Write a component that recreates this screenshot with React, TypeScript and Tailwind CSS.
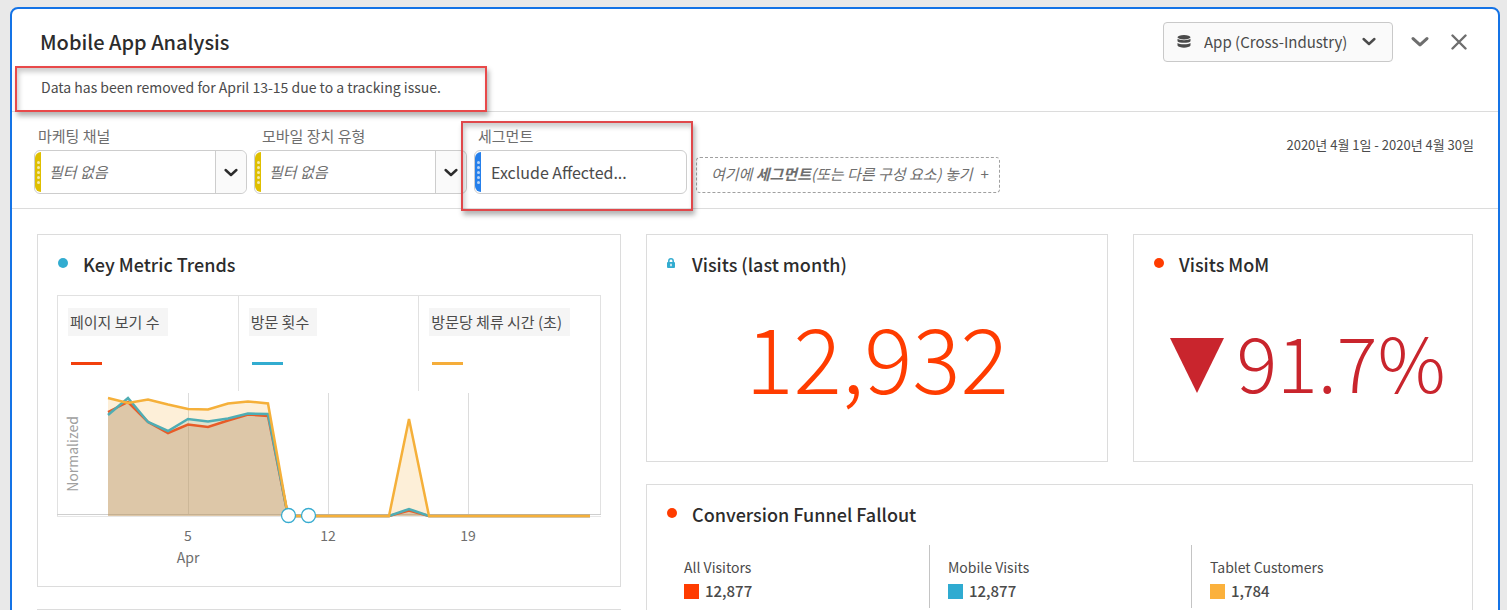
import type { ReactNode } from "react";

type Series = { name: string; color: string; opacity: number; points: [number, number][] };

const tail: [number, number][] = [
  [231, 125],
  [332, 125],
];

const series: Series[] = [
  {
    name: "페이지 보기 수",
    color: "#e85c28",
    opacity: 0.25,
    points: [[51, 21], [71, 11], [91, 31], [111, 42], [131, 33.5], [151, 36], [171, 29.5], [191, 23.5], [211, 25], ...tail, [352, 119.5], [372, 125], [533, 125]],
  },
  {
    name: "방문 횟수",
    color: "#4fadb4",
    opacity: 0.2,
    points: [[51, 24], [71, 7], [91, 31], [111, 40], [131, 28], [151, 30.5], [171, 27.5], [191, 22.5], [211, 23], ...tail, [352, 118], [372, 125], [533, 125]],
  },
  {
    name: "방문당 체류 시간 (초)",
    color: "#f5b03a",
    opacity: 0.2,
    points: [[51, 7], [71, 12], [91, 8.5], [111, 13.5], [131, 18], [151, 18.5], [171, 12.5], [191, 10.5], [211, 12.5], ...tail, [352, 28], [372, 125], [533, 125]],
  },
];

const toPath = (pts: [number, number][]) => "M" + pts.map((p) => p.join(" ")).join("L");

function Chevron({ className }: { className: string }) {
  return (
    <svg viewBox="0 0 14 9" fill="none" stroke="currentColor" strokeWidth="2.4" strokeLinecap="round" strokeLinejoin="round" className={className} aria-hidden="true">
      <path d="M1.6 2L7 7l5.4-5" />
    </svg>
  );
}

function Handle({ className }: { className: string }) {
  return (
    <span className={`flex w-1.5 shrink-0 flex-col items-center justify-center gap-0.5 rounded-l-md ${className}`}>
      {[0, 1, 2, 3, 4].map((i) => (
        <span key={i} className="size-[3px] rounded-full bg-white/65" />
      ))}
    </span>
  );
}

function Filter({ id, label, labelClass }: { id: string; label: string; labelClass: string }) {
  return (
    <div className="flex w-[213px] flex-col gap-1">
      <label htmlFor={id} className={`text-[15px] leading-5 text-[#6e6e6e] ${labelClass}`}>
        {label}
      </label>
      <div className="relative flex h-11 rounded-md border border-[#cdcdcd] bg-white py-px">
        <Handle className="bg-[#dfbf00]" />
        <select id={id} className="min-w-0 flex-1 appearance-none pl-2 text-[15px] text-[#6e6e6e] italic">
          <option>필터 없음</option>
        </select>
        <span className="pointer-events-none absolute inset-y-0 right-0 flex w-[31px] items-center justify-center rounded-r-md border-l border-[#cdcdcd] bg-[#fafafa] text-[#2c2c2c]">
          <Chevron className="w-3.5" />
        </span>
      </div>
    </div>
  );
}

function Card({ marker, title, className, children }: { marker: ReactNode; title: string; className: string; children?: ReactNode }) {
  return (
    <section className={`border border-[#dcdcdc] bg-white ${className}`}>
      <header className="flex h-[60px] items-center pl-5">
        <span className="flex w-[25px] shrink-0 items-center pb-1">{marker}</span>
        <h2 className="pb-0.5 text-lg font-medium text-[#2c2c2c]">{title}</h2>
      </header>
      {children}
    </section>
  );
}

function Dot({ className }: { className: string }) {
  return <span className={`size-2.5 rounded-full ${className}`} />;
}

function TrendChart() {
  return (
    <svg viewBox="0 0 544 184" className="block h-auto w-full" role="img" aria-label="Key Metric Trends">
      <path d="M.5 0V126M543.5 0V124" stroke="#e1e1e1" />
      <path d="M131.5 2V124M271.5 2V124M411.5 2V124" stroke="#dcdcdc" />
      <path d="M0 123.5H544" stroke="#cfcfcf" />
      <path d="M0 125.5H544" stroke="#e6e6e6" />
      {series.map((s) => (
        <path key={s.name} d={`${toPath(s.points)}V125H51Z`} fill={s.color} fillOpacity={s.opacity} />
      ))}
      {series.map((s) => (
        <path key={s.name} d={toPath(s.points)} fill="none" stroke={s.color} strokeWidth="2.5" />
      ))}
      <g fill="#fff" stroke="#38acd0" strokeWidth="1.3">
        <circle cx="231.5" cy="124.5" r="7" />
        <circle cx="251.5" cy="124.5" r="7" />
      </g>
      <g fontSize="14" textAnchor="middle" fill="#6e6e6e">
        <text x="131" y="150">5</text>
        <text x="131" y="172">Apr</text>
        <text x="271" y="150">12</text>
        <text x="411" y="150">19</text>
        <text transform="translate(21 63) rotate(-90)" fill="#a0a0a0">Normalized</text>
      </g>
    </svg>
  );
}

const legend = [
  { label: "페이지 보기 수", bar: "bg-[#f2400d]" },
  { label: "방문 횟수", bar: "bg-[#32acd0]" },
  { label: "방문당 체류 시간 (초)", bar: "bg-[#f5ad3a]" },
];

const funnel = [
  { label: "All Visitors", value: "12,877", swatch: "bg-[#ff3c00]" },
  { label: "Mobile Visits", value: "12,877", swatch: "bg-[#2fabd1]" },
  { label: "Tablet Customers", value: "1,784", swatch: "bg-[#fbb13c]" },
];

export default function App() {
  return (
    <div className="h-screen overflow-hidden bg-[#e9e9e9] pt-[7px] pr-[7px] pl-[10px] font-['Noto_Sans_CJK_KR',sans-serif] text-[#4b4b4b]">
      <main className="rounded-t-lg border-2 border-[#1473e6] bg-white">
        <header className="border-b border-[#dcdcdc]">
          <div className="flex h-[57px] items-start justify-between pr-[31px] pl-7">
            <h1 className="pt-[19px] text-xl leading-7 font-medium text-[#2c2c2c]">Mobile App Analysis</h1>
            <div className="flex items-center pt-[13px]">
              <div className="relative">
                <svg viewBox="0 0 14 13" className="pointer-events-none absolute top-[13px] left-[14px] w-3.5" fill="#4b4b4b" aria-hidden="true">
                  <ellipse cx="7" cy="2.2" rx="6.5" ry="2.2" />
                  <path d="M.5 3.8C2 5.6 12 5.6 13.5 3.8V6.2C12.2 8.4 1.8 8.4.5 6.2Z" />
                  <path d="M.5 8C2 9.8 12 9.8 13.5 8V10.6C12.2 13.4 1.8 13.4.5 10.6Z" />
                </svg>
                <select aria-label="Report suite" className="h-10 w-[230px] appearance-none rounded border border-[#c9c9c9] bg-[#fafafa] pl-10 text-[15px] text-[#4b4b4b]">
                  <option>App (Cross-Industry)</option>
                </select>
                <Chevron className="pointer-events-none absolute top-[15px] right-[17px] w-3.5" />
              </div>
              <button type="button" aria-label="Collapse" className="ml-[18px] text-[#6e6e6e]">
                <Chevron className="w-[18px]" />
              </button>
              <button type="button" aria-label="Close" className="ml-[22px] text-[#6e6e6e]">
                <svg viewBox="0 0 16 16" className="w-4" stroke="currentColor" strokeWidth="2.4" strokeLinecap="round" aria-hidden="true">
                  <path d="M1.5 1.5l13 13M14.5 1.5l-13 13" />
                </svg>
              </button>
            </div>
          </div>
          <p className="relative -mb-px ml-[3px] flex h-[46px] w-[472px] items-center border-2 border-[#e8494a] pb-1 pl-6 text-sm shadow-[2px_4px_5px_rgba(0,0,0,0.3),inset_2px_4px_5px_rgba(0,0,0,0.2)]">
            Data has been removed for April 13-15 due to a tracking issue.
          </p>
        </header>

        <div className="flex h-[97px] items-start border-b border-[#dcdcdc] pr-6 pl-[22px]">
          <div className="flex gap-[7px] pt-3.5">
            <Filter id="channel" label="마케팅 채널" labelClass="pl-1" />
            <Filter id="device" label="모바일 장치 유형" labelClass="pl-2" />
            <div className="relative flex w-[213px] flex-col gap-1">
              <div className="pointer-events-none absolute -inset-x-[13px] -top-[5px] h-[90px] w-[232px] border-2 border-[#e0484b] shadow-[2px_4px_5px_rgba(0,0,0,0.3),inset_2px_4px_5px_rgba(0,0,0,0.2)]" />
              <span className="pl-1 text-[15px] leading-5 text-[#6e6e6e]">세그먼트</span>
              <button type="button" className="flex h-11 rounded-md border border-[#cdcdcd] bg-white py-px text-left text-base">
                <Handle className="h-full bg-[#2680eb]" />
                <span className="self-center pl-2.5">Exclude Affected...</span>
              </button>
            </div>
          </div>
          <div className="mt-[45px] ml-[9px] flex h-9 shrink-0 items-center gap-2 rounded border border-dashed border-[#a0a0a0] pr-2.5 pb-0.5 pl-3.5 text-[15px] text-[#6e6e6e]">
            <span className="italic">
              여기에 <strong className="font-bold">세그먼트</strong>(또는 다른 구성 요소) 놓기
            </span>
            <span>+</span>
          </div>
          <time className="mt-[23px] ml-auto text-[13px] leading-5">2020년 4월 1일 - 2020년 4월 30일</time>
        </div>

        <div className="grid grid-cols-[584fr_827fr] gap-x-[25px] px-[25px] pt-[25px]">
          <div className="flex flex-col gap-[22px]">
            <Card title="Key Metric Trends" className="pb-[11px]" marker={<Dot className="bg-[#32acd0]" />}>
              <div className="px-[19px]">
                <div className="grid h-24 grid-cols-3 border border-b-0 border-[#e1e1e1]">
                  {legend.map((l) => (
                    <div key={l.label} className="flex flex-col items-start gap-[26px] border-r border-[#e1e1e1] pt-3 pl-2.5 last:border-r-0">
                      <span className="h-7 bg-[#f5f5f5] pr-2 pl-0.5 text-[15px] leading-7">{l.label}</span>
                      <span className={`ml-[3px] h-[3px] w-[31px] ${l.bar}`} />
                    </div>
                  ))}
                </div>
                <TrendChart />
              </div>
            </Card>
            <section className="h-60 border border-[#dcdcdc]" />
          </div>

          <div className="flex flex-col gap-[22px]">
            <div className="grid grid-cols-[462fr_340fr] gap-[25px]">
              <Card
                title="Visits (last month)"
                className="h-[228px]"
                marker={
                  <svg viewBox="0 0 8 10" className="w-2" aria-hidden="true">
                    <path d="M1.8 5V3a2.2 2.2 0 0 1 4.4 0V5" fill="none" stroke="#32acd0" strokeWidth="1.5" />
                    <rect y="4" width="8" height="6" rx="1" fill="#32acd0" />
                    <path d="M4 5.8v2.4" stroke="#fff" strokeWidth="1.4" />
                  </svg>
                }
              >
                <p className="text-center text-[90px] leading-[120px] font-light text-[#ff3c00]">12,932</p>
              </Card>
              <Card title="Visits MoM" className="h-[228px]" marker={<Dot className="bg-[#ff3c00]" />}>
                <p className="flex items-center justify-center gap-3 pl-2.5 text-[76px] leading-[130px] font-light text-[#c9252d]">
                  <svg viewBox="0 0 54 55" className="mt-2.5 w-[54px] shrink-0" aria-label="Down">
                    <path d="M0 0H54L27 55Z" fill="currentColor" />
                  </svg>
                  91.7%
                </p>
              </Card>
            </div>
            <Card title="Conversion Funnel Fallout" className="h-[360px]" marker={<Dot className="bg-[#ff3c00]" />}>
              <div className="grid grid-cols-[282fr_262fr_281fr]">
                {funnel.map((f) => (
                  <div key={f.label} className="h-[63px] border-l border-[#c4c4c4] pt-3 pl-[18px] first:border-l-0 first:pl-[37px]">
                    <p className="text-sm leading-5">{f.label}</p>
                    <p className="flex items-center gap-1.5 pt-0.5 text-[15px] leading-6 font-medium">
                      <span className={`size-[15px] ${f.swatch}`} />
                      {f.value}
                    </p>
                  </div>
                ))}
              </div>
            </Card>
          </div>
        </div>
      </main>
    </div>
  );
}
